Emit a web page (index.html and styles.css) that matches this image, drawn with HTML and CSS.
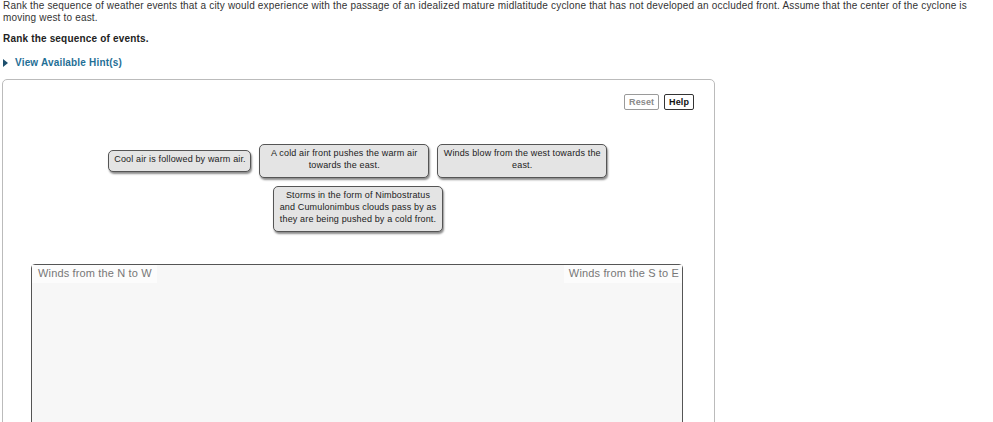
FILE: index.html
```html
<!DOCTYPE html>
<html>
<head>
<meta charset="utf-8">
<link rel="stylesheet" href="styles.css">
</head>
<body>
<div class="page">
  <p class="question">Rank the sequence of weather events that a city would experience with the passage of an idealized mature midlatitude cyclone that has not developed an occluded front. Assume that the center of the cyclone is moving west to east.</p>
  <p class="instruction">Rank the sequence of events.</p>
  <div class="hint"><span class="tri"></span><span class="hint-text">View Available Hint(s)</span></div>
  <div class="panel">
    <div class="toolbar">
      <button class="btn btn-reset">Reset</button>
      <button class="btn btn-help">Help</button>
    </div>
    <div class="pool">
      <div class="row">
        <div class="card">Cool air is followed by warm air.</div>
        <div class="card">A cold air front pushes the warm air towards the east.</div>
        <div class="card">Winds blow from the west towards the east.</div>
      </div>
      <div class="row">
        <div class="card">Storms in the form of Nimbostratus and Cumulonimbus clouds pass by as they are being pushed by a cold front.</div>
      </div>
    </div>
    <div class="dropzone">
      <div class="labels">
        <span class="label label-left">Winds from the N to W</span>
        <span class="label label-right">Winds from the S to E</span>
      </div>
    </div>
  </div>
</div>
</body>
</html>
```

FILE: styles.css
```css
html, body {
  margin: 0;
  padding: 0;
  background: #ffffff;
}
.page {
  font-family: "Liberation Sans", Arial, sans-serif;
  font-size: 10px;
  line-height: 12px;
  letter-spacing: 0.18px;
  color: #333333;
  height: 422px;
  overflow: hidden;
}
.question {
  margin: 0;
  padding: 0 3px;
  width: 975px;
}
.instruction {
  margin: 9px 0 0 0;
  padding: 0 3px;
  font-weight: bold;
  color: #222222;
}
.hint {
  margin-top: 12px;
  padding-left: 3px;
  display: flex;
  align-items: center;
  height: 12px;
}
.tri {
  width: 0;
  height: 0;
  border-left: 5px solid #1d4f6d;
  border-top: 4px solid transparent;
  border-bottom: 4px solid transparent;
}
.hint-text {
  margin-left: 7px;
  font-weight: bold;
  color: #1f6f96;
}
.panel {
  margin: 10px 0 0 2px;
  width: 713px;
  box-sizing: border-box;
  border: 1px solid #bbbbbb;
  border-radius: 5px;
  padding: 14px 20px 0 0;
  height: 400px;
}
.toolbar {
  display: flex;
  justify-content: flex-end;
  gap: 5px;
}
.btn {
  font-family: "Liberation Sans", Arial, sans-serif;
  font-size: 9px;
  font-weight: bold;
  letter-spacing: 0.1px;
  height: 16px;
  line-height: 14px;
  padding: 0 4px;
  background: #ffffff;
  border-radius: 2px;
  margin: 0;
}
.btn-reset {
  border: 1px solid #9a9a9a;
  color: #8a8a8a;
}
.btn-help {
  border: 1px solid #333333;
  color: #111111;
}
.pool {
  margin-top: 34px;
  margin-right: -18px;
  display: flex;
  flex-direction: column;
  align-items: center;
  gap: 8px;
}
.row {
  display: flex;
  align-items: center;
  gap: 8px;
}
.card {
  box-sizing: border-box;
  max-width: 170px;
  padding: 2px 4px 6px 5px;
  font-size: 9px;
  line-height: 12px;
  letter-spacing: 0.15px;
  color: #222222;
  text-align: center;
  background: #e4e4e4;
  border: 1px solid #555555;
  border-radius: 5px;
  box-shadow: 1px 2px 2px rgba(0, 0, 0, 0.45);
}
.dropzone {
  margin: 32px 11px 0 28px;
  height: 200px;
  background: #f7f7f7;
  border: 1px solid #555555;
  border-radius: 4px 4px 0 0;
}
.labels {
  display: flex;
  justify-content: space-between;
}
.label {
  font-size: 11px;
  line-height: 12px;
  letter-spacing: 0.15px;
  color: #777777;
  background: #fcfcfc;
  padding: 2px 5px 4px 6px;
}
.label-right {
  padding: 2px 3px 4px 5px;
}
```
